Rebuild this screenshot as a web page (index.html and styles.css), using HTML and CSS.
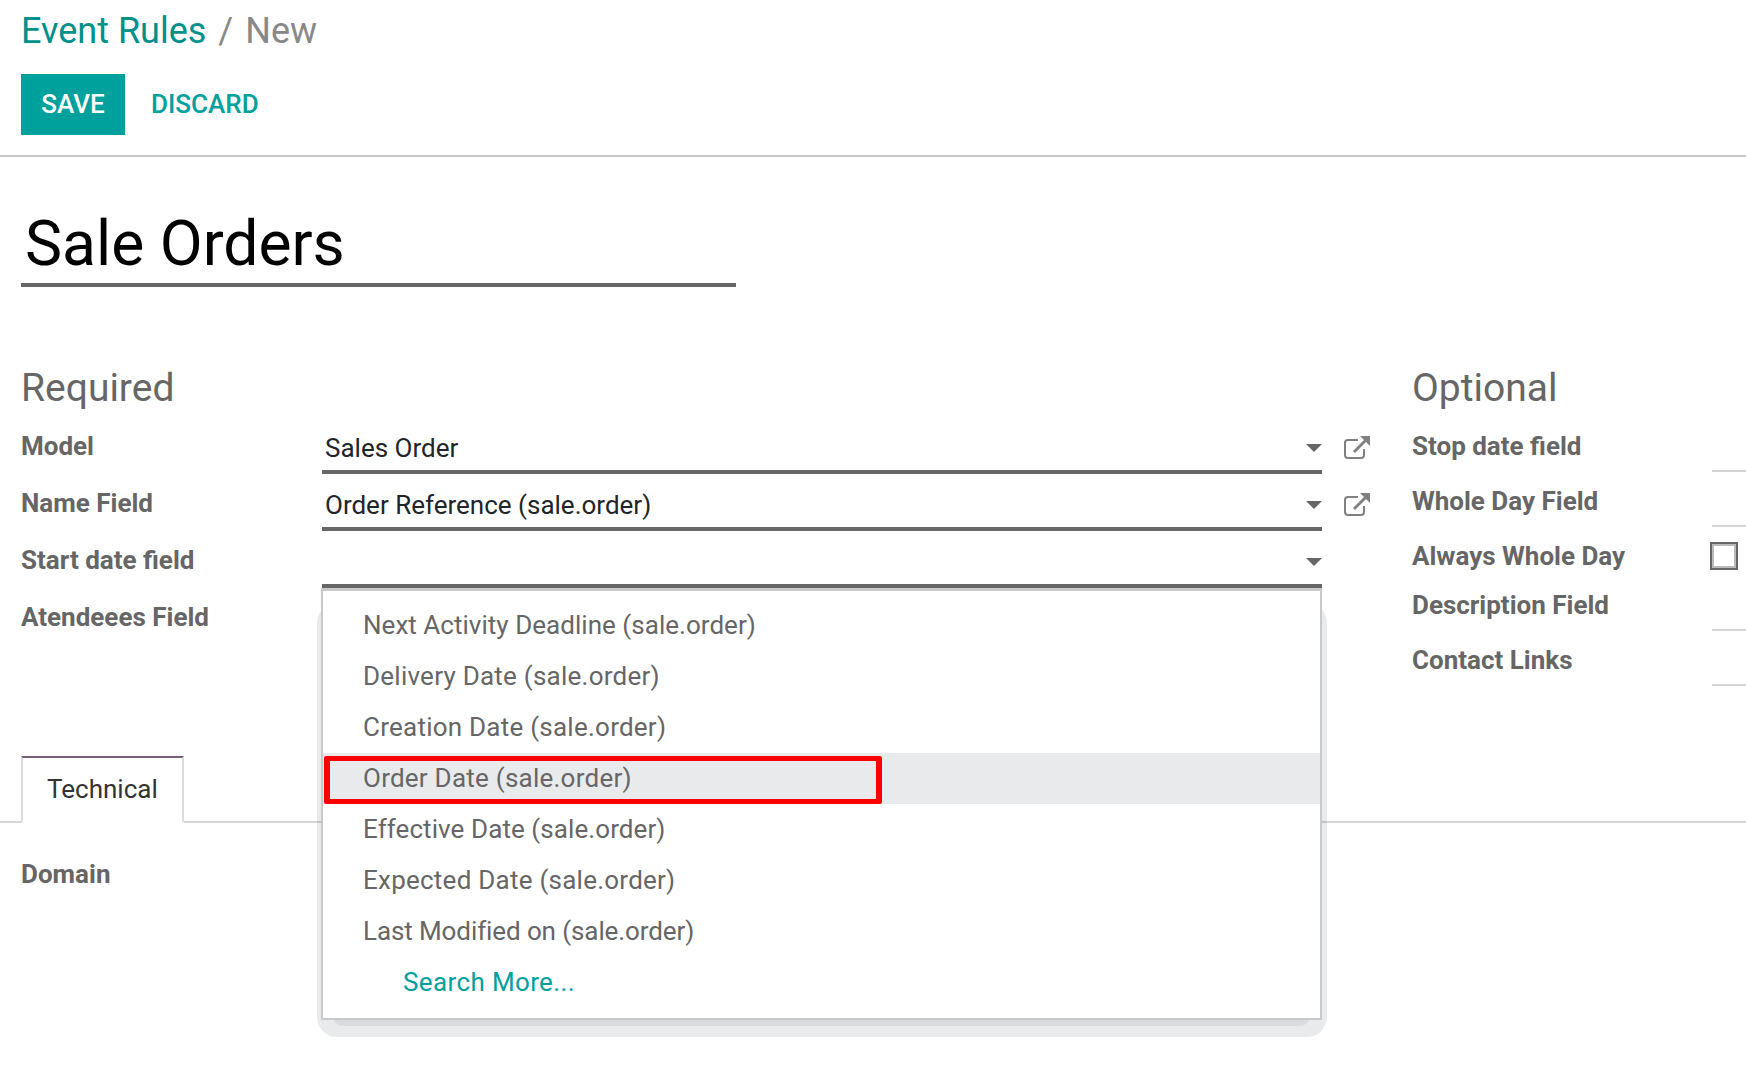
FILE: index.html
```html
<!DOCTYPE html>
<html lang="en">
<head>
  <meta charset="UTF-8" />
  <title>Event Rules - New</title>
  <link rel="stylesheet" href="styles.css">
</head>
<body>
  <div class="control-panel">
    <div class="breadcrumb"><a class="crumb-link">Event Rules</a><span class="crumb-sep">/</span><span class="crumb-current">New</span></div>
    <div class="buttons">
      <button class="btn-save">SAVE</button>
      <button class="btn-discard">DISCARD</button>
    </div>
  </div>

  <div class="sheet">
    <div class="title-field">Sale Orders</div>

    <div class="groups">
      <div class="group group-left">
        <h3>Required</h3>
        <div class="row">
          <label>Model</label>
          <div class="many2one">
            <div class="field"><span>Sales Order</span><i class="caret"></i></div>
            <svg class="ext-link" viewBox="0 0 26 24"><path d="M20 13v6a3 3 0 0 1-3 3H4a3 3 0 0 1-3-3V7a3 3 0 0 1 3-3h10"/><path class="ext-shaft" d="M10 16 22 4"/><path class="ext-head" d="M16 0H26V10Z"/></svg>
          </div>
        </div>
        <div class="row">
          <label>Name Field</label>
          <div class="many2one">
            <div class="field"><span>Order Reference (sale.order)</span><i class="caret"></i></div>
            <svg class="ext-link" viewBox="0 0 26 24"><path d="M20 13v6a3 3 0 0 1-3 3H4a3 3 0 0 1-3-3V7a3 3 0 0 1 3-3h10"/><path class="ext-shaft" d="M10 16 22 4"/><path class="ext-head" d="M16 0H26V10Z"/></svg>
          </div>
        </div>
        <div class="row">
          <label>Start date field</label>
          <div class="many2one">
            <div class="field"><span></span><i class="caret"></i>
              <div class="dropdown">
                <ul class="dropdown-list">
                  <li class="item-next">Next Activity Deadline (sale.order)</li>
                  <li>Delivery Date (sale.order)</li>
                  <li>Creation Date (sale.order)</li>
                  <li class="active">Order Date (sale.order)<span class="red-box"></span></li>
                  <li class="item-effective">Effective Date (sale.order)</li>
                  <li>Expected Date (sale.order)</li>
                  <li class="item-last">Last Modified on (sale.order)</li>
                  <li class="search-more">Search More...</li>
                </ul>
              </div>
            </div>
          </div>
        </div>
        <div class="row">
          <label>Atendeees Field</label>
        </div>
      </div>

      <div class="group group-right">
        <h3>Optional</h3>
        <div class="row row-opt"><label>Stop date field</label><div class="line"></div></div>
        <div class="row row-opt"><label>Whole Day Field</label><div class="line"></div></div>
        <div class="row row-check"><label>Always Whole Day</label><div class="checkbox"></div></div>
        <div class="row row-opt"><label>Description Field</label><div class="line"></div></div>
        <div class="row row-opt"><label>Contact Links</label><div class="line"></div></div>
      </div>
    </div>

    <div class="tabs"><div class="tab">Technical</div></div>
    <div class="tab-body"><label>Domain</label></div>
  </div>
</body>
</html>
```

FILE: styles.css
```css
:root {
  --teal: #00a09d;
  --teal-dark: #00908c;
  --label: #666666;
  --rule: #d4d4d4;
}

* {
  box-sizing: border-box;
}

html, body {
  height: 100%;
}

body {
  margin: 0;
  background: #ffffff;
  color: #212529;
  font-family: Roboto, "Liberation Sans", sans-serif;
  overflow: hidden;
}

.control-panel {
  height: 157px;
  padding: 11px 21px 0;
  border-bottom: 2px solid #c9c9c9;
}

.breadcrumb {
  height: 41px;
  margin-bottom: 22px;
  font-size: 36px;
  line-height: 41px;
}

.crumb-link {
  color: var(--teal-dark);
}

.crumb-sep {
  margin: 0 12px;
  color: #888888;
}

.crumb-current {
  color: #888888;
}

.buttons {
  display: flex;
  align-items: center;
}

.btn-save, .btn-discard {
  height: 61px;
  padding: 0 0 2px;
  border: none;
  font-family: inherit;
  font-size: 26px;
  font-weight: 500;
}

.btn-save {
  width: 104px;
  background: var(--teal);
  color: #ffffff;
}

.btn-discard {
  margin-left: 26px;
  background: none;
  color: var(--teal);
}

.sheet {
  padding: 0 0 0 21px;
}

.title-field {
  width: 715px;
  height: 78px;
  margin-top: 52px;
  padding-left: 4px;
  border-bottom: 4px solid #666666;
  color: #000000;
  font-size: 62.4px;
  line-height: 70px;
}

.groups {
  display: flex;
  margin-top: 79px;
}

.group h3 {
  margin: 0 0 13px;
  color: var(--label);
  font-size: 39px;
  font-weight: 400;
  line-height: 45px;
}

.group-left {
  width: 1391px;
  flex: none;
}

.group-right {
  flex: 1;
}

.row {
  display: flex;
  height: 57px;
}

label {
  display: block;
  color: var(--label);
  font-size: 26px;
  font-weight: 700;
  line-height: 32px;
}

.row label {
  padding-top: 6px;
}

.group-left label {
  width: 301px;
  flex: none;
}

.group-right label {
  width: 300px;
  flex: none;
}

.many2one {
  display: flex;
  width: 1049px;
}

.field {
  position: relative;
  display: flex;
  align-items: center;
  justify-content: space-between;
  width: 1000px;
  height: 50px;
  padding: 2px 0 0 3px;
  border-bottom: 4px solid #666666;
  color: #212529;
  font-size: 26px;
}

.caret {
  width: 0;
  height: 0;
  border-top: 8px solid #666666;
  border-left: 8px solid transparent;
  border-right: 8px solid transparent;
}

.ext-link {
  width: 26px;
  height: 24px;
  margin: 12px 0 0 22px;
  fill: none;
  stroke: #808080;
  stroke-width: 2;
}

.ext-link .ext-shaft {
  stroke-width: 2.8;
}

.ext-link .ext-head {
  fill: #808080;
  stroke: none;
}

.row-opt {
  height: 55px;
}

.row-check {
  height: 49px;
}

.line {
  flex: 1;
  height: 49px;
  margin-top: -1px;
  border-bottom: 2px solid var(--rule);
}

.checkbox {
  width: 28px;
  height: 28px;
  margin: 8px 0 0 -2px;
  border: 2px solid #666666;
  box-shadow: inset 0 0 0 2px #bbbbbb;
}

.dropdown {
  position: absolute;
  top: calc(100% + 4px);
  left: -1px;
  z-index: 5;
  width: 1001px;
}

.dropdown::before {
  content: "";
  position: absolute;
  top: 15px;
  left: -4px;
  right: -5px;
  bottom: -17px;
  border-radius: 20px;
  background: rgba(40, 50, 70, 0.1);
}

.dropdown::after {
  content: "";
  position: absolute;
  left: 11px;
  right: 11px;
  bottom: -6px;
  height: 30px;
  border-radius: 0 0 12px 12px;
  background: rgba(40, 50, 70, 0.08);
}

.dropdown-list {
  position: relative;
  z-index: 1;
  margin: 0;
  padding: 9px 0 10px;
  border: 2px solid #c9c9c9;
  border-top-width: 3px;
  background: #ffffff;
  color: #666666;
  font-size: 26px;
  list-style: none;
}

.dropdown-list li {
  position: relative;
  height: 51px;
  padding-left: 40px;
  letter-spacing: 0.24px;
  line-height: 51px;
}

.dropdown-list li.item-next {
  letter-spacing: 0.03px;
}

.dropdown-list li.item-effective {
  letter-spacing: 0.08px;
}

.dropdown-list li.item-last {
  letter-spacing: -0.1px;
}

.dropdown-list li.active {
  background: #e9eaec;
}

.dropdown-list li.search-more {
  padding-left: 80px;
  color: var(--teal);
  letter-spacing: 0.37px;
}

.red-box {
  position: absolute;
  top: 3px;
  left: 1px;
  width: 558px;
  height: 48px;
  border: 5px solid #ff0000;
  border-left-width: 6px;
  border-right-width: 6px;
  border-radius: 2px;
}

.tabs {
  height: 67px;
  margin: 63px 0 0 -21px;
  padding-left: 21px;
  border-bottom: 2px solid var(--rule);
}

.tab {
  width: 163px;
  height: 67px;
  padding: 14px 0 0 24px;
  border: 2px solid #dcdcdc;
  border-top-color: #7c5c7c;
  border-bottom-color: #ffffff;
  background: #ffffff;
  color: #333333;
  font-size: 26px;
  line-height: 34px;
}

.tab-body {
  padding-top: 35px;
}
```
